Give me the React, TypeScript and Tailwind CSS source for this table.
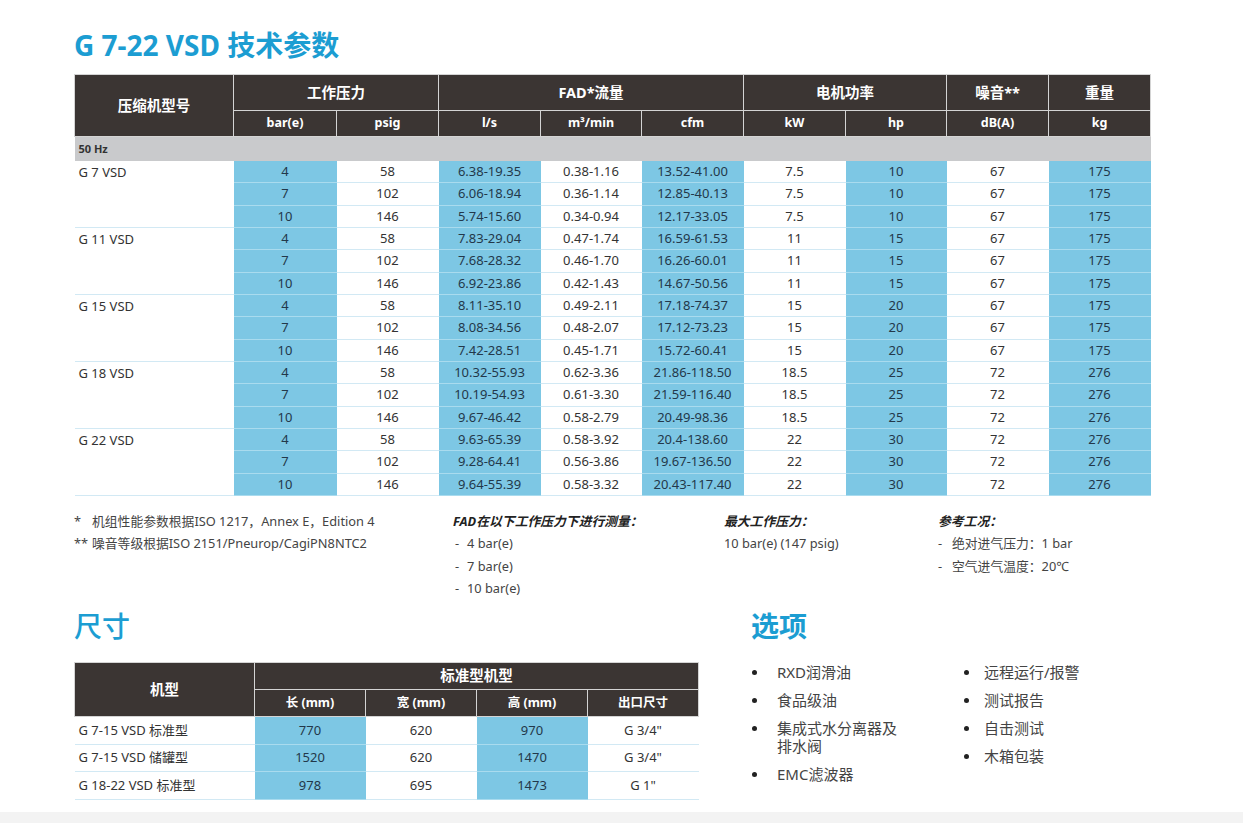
const font = { fontFamily: "'Noto Sans', 'Noto Sans CJK SC', sans-serif" };

type Group = { model: string; rows: string[][] };

const groups: Group[] = [
  {
    model: 'G 7 VSD',
    rows: [
      ['4', '58', '6.38-19.35', '0.38-1.16', '13.52-41.00', '7.5', '10', '67', '175'],
      ['7', '102', '6.06-18.94', '0.36-1.14', '12.85-40.13', '7.5', '10', '67', '175'],
      ['10', '146', '5.74-15.60', '0.34-0.94', '12.17-33.05', '7.5', '10', '67', '175'],
    ],
  },
  {
    model: 'G 11 VSD',
    rows: [
      ['4', '58', '7.83-29.04', '0.47-1.74', '16.59-61.53', '11', '15', '67', '175'],
      ['7', '102', '7.68-28.32', '0.46-1.70', '16.26-60.01', '11', '15', '67', '175'],
      ['10', '146', '6.92-23.86', '0.42-1.43', '14.67-50.56', '11', '15', '67', '175'],
    ],
  },
  {
    model: 'G 15 VSD',
    rows: [
      ['4', '58', '8.11-35.10', '0.49-2.11', '17.18-74.37', '15', '20', '67', '175'],
      ['7', '102', '8.08-34.56', '0.48-2.07', '17.12-73.23', '15', '20', '67', '175'],
      ['10', '146', '7.42-28.51', '0.45-1.71', '15.72-60.41', '15', '20', '67', '175'],
    ],
  },
  {
    model: 'G 18 VSD',
    rows: [
      ['4', '58', '10.32-55.93', '0.62-3.36', '21.86-118.50', '18.5', '25', '72', '276'],
      ['7', '102', '10.19-54.93', '0.61-3.30', '21.59-116.40', '18.5', '25', '72', '276'],
      ['10', '146', '9.67-46.42', '0.58-2.79', '20.49-98.36', '18.5', '25', '72', '276'],
    ],
  },
  {
    model: 'G 22 VSD',
    rows: [
      ['4', '58', '9.63-65.39', '0.58-3.92', '20.4-138.60', '22', '30', '72', '276'],
      ['7', '102', '9.28-64.41', '0.56-3.86', '19.67-136.50', '22', '30', '72', '276'],
      ['10', '146', '9.64-55.39', '0.58-3.32', '20.43-117.40', '22', '30', '72', '276'],
    ],
  },
];

const dims = [
  ['G 7-15 VSD 标准型', '770', '620', '970', 'G 3/4"'],
  ['G 7-15 VSD 储罐型', '1520', '620', '1470', 'G 3/4"'],
  ['G 18-22 VSD 标准型', '978', '695', '1473', 'G 1"'],
];

const th = 'bg-[#3b3533] text-white font-bold border border-[#d4d4d4] text-[12.5px]';
const thBig = 'bg-[#3b3533] text-white font-bold border border-[#d4d4d4] text-[14.5px]';

export default function App() {
  return (
    <div style={font} className="w-[1243px] h-[823px] bg-white flex flex-col text-[#333] overflow-hidden">
      <div className="h-[812px] pl-[74px]">
        <h1 className="pt-[27px] mb-[10px] text-[28px] leading-[37px] font-bold text-[#1c9dd2]">G 7-22 VSD 技术参数</h1>

        <table className="table-fixed border-collapse w-[1076px] text-[13px]">
          <colgroup>
            <col className="w-[159px]" />
            <col className="w-[103px]" />
            <col className="w-[102px]" />
            <col className="w-[102px]" />
            <col className="w-[101px]" />
            <col className="w-[102px]" />
            <col className="w-[102px]" />
            <col className="w-[101px]" />
            <col className="w-[102px]" />
            <col className="w-[102px]" />
          </colgroup>
          <thead>
            <tr className="h-[36px]">
              <th rowSpan={2} className={thBig}>压缩机型号</th>
              <th colSpan={2} className={thBig}>工作压力</th>
              <th colSpan={3} className={thBig}>FAD*流量</th>
              <th colSpan={2} className={thBig}>电机功率</th>
              <th className={thBig}>噪音**</th>
              <th className={thBig}>重量</th>
            </tr>
            <tr className="h-[26px]">
              {['bar(e)', 'psig', 'l/s', 'm³/min', 'cfm', 'kW', 'hp', 'dB(A)', 'kg'].map(u => (
                <th key={u} className={th}>{u}</th>
              ))}
            </tr>
          </thead>
          <tbody>
            <tr className="h-[24px]">
              <td colSpan={10} className="bg-[#c9cacc] pl-[4px] font-bold text-[11px] text-[#333]">50 Hz</td>
            </tr>
            {groups.map(g =>
              g.rows.map((r, i) => (
                <tr key={g.model + i} className="h-[22.33px]">
                  {i === 0 && (
                    <td rowSpan={3} className="align-top pl-[4px] leading-[22px] border-b border-[#d2e9f4]">{g.model}</td>
                  )}
                  {r.map((v, j) => (
                    <td
                      key={j}
                      className={`text-center leading-[21px] border-b ${j % 2 === 0 ? 'bg-[#7dc7e4] text-[#23384a] border-[#a9dbee]' : 'border-[#d2e9f4]'}`}
                    >
                      {v}
                    </td>
                  ))}
                </tr>
              ))
            )}
          </tbody>
        </table>

        <div className="flex mt-[14px] text-[12.8px] leading-[22.5px] text-[#444]">
          <div className="w-[379px]">
            <div className="flex"><span className="w-[18px]">*</span><span>机组性能参数根据ISO 1217，Annex E，Edition 4</span></div>
            <div className="flex"><span className="w-[18px]">**</span><span>噪音等级根据ISO 2151/Pneurop/CagiPN8NTC2</span></div>
          </div>
          <div className="w-[271px]">
            <div className="font-bold italic text-[#222]">FAD在以下工作压力下进行测量：</div>
            {['4 bar(e)', '7 bar(e)', '10 bar(e)'].map(t => (
              <div key={t} className="flex pl-[2px]"><span className="w-[12px]">-</span><span>{t}</span></div>
            ))}
          </div>
          <div className="w-[214px]">
            <div className="font-bold italic text-[#222]">最大工作压力：</div>
            <div>10 bar(e) (147 psig)</div>
          </div>
          <div>
            <div className="font-bold italic text-[#222]">参考工况：</div>
            <div className="flex"><span className="w-[14px]">-</span><span>绝对进气压力：1 bar</span></div>
            <div className="flex"><span className="w-[14px]">-</span><span>空气进气温度：20℃</span></div>
          </div>
        </div>

        <div className="flex mt-[6px] gap-[53px]">
          <div className="w-[624px]">
            <h2 className="text-[28px] leading-[40px] font-medium text-[#1c9dd2] mb-[16px]">尺寸</h2>
            <table className="table-fixed border-collapse w-[624px] text-[13px]">
              <colgroup>
                <col className="w-[180px]" />
                <col className="w-[111px]" />
                <col className="w-[111px]" />
                <col className="w-[111px]" />
                <col className="w-[111px]" />
              </colgroup>
              <thead>
                <tr className="h-[27px]">
                  <th rowSpan={2} className={thBig}>机型</th>
                  <th colSpan={4} className={thBig}>标准型机型</th>
                </tr>
                <tr className="h-[27px]">
                  {['长 (mm)', '宽 (mm)', '高 (mm)', '出口尺寸'].map(u => (
                    <th key={u} className={th}>{u}</th>
                  ))}
                </tr>
              </thead>
              <tbody>
                {dims.map(r => (
                  <tr key={r[0]} className="h-[27.7px]">
                    <td className="pl-[4px] border-b border-[#d2e9f4]">{r[0]}</td>
                    {r.slice(1).map((v, j) => (
                      <td
                        key={j}
                        className={`text-center border-b ${j % 2 === 0 ? 'bg-[#7dc7e4] text-[#23384a] border-[#a9dbee]' : 'border-[#d2e9f4]'}`}
                      >
                        {v}
                      </td>
                    ))}
                  </tr>
                ))}
              </tbody>
            </table>
          </div>

          <div>
            <h2 className="text-[28px] leading-[40px] font-semibold text-[#1c9dd2] mb-[17px]">选项</h2>
            <div className="flex text-[15px] leading-[18px] text-[#444]">
              <ul className="w-[212px] flex flex-col gap-[10px]">
                {['RXD润滑油', '食品级油', '集成式水分离器及排水阀', 'EMC滤波器'].map(t => (
                  <li key={t} className="flex">
                    <span className="w-[26px] pl-[1px] pt-[7px]"><span className="block w-[5px] h-[5px] rounded-full bg-[#222]" /></span>
                    <span className="w-[130px]">{t}</span>
                  </li>
                ))}
              </ul>
              <ul className="flex flex-col gap-[10px]">
                {['远程运行/报警', '测试报告', '自击测试', '木箱包装'].map(t => (
                  <li key={t} className="flex">
                    <span className="w-[21px] pl-[1px] pt-[7px]"><span className="block w-[5px] h-[5px] rounded-full bg-[#222]" /></span>
                    <span>{t}</span>
                  </li>
                ))}
              </ul>
            </div>
          </div>
        </div>
      </div>
      <div className="h-[11px] bg-[#f3f3f3]" />
    </div>
  );
}
